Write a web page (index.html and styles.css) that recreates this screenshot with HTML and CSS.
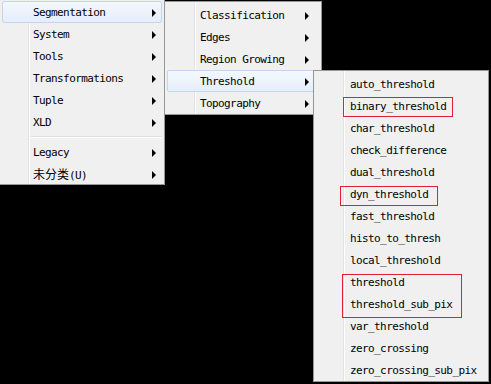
FILE: index.html
```html
<!DOCTYPE html>
<html lang="en">
<head>
    <meta charset="UTF-8">
    <title>Operators menu</title>
    <link rel="stylesheet" href="styles.css">
</head>
<body>
    <div class="menu menu-main">
        <div class="item active">Segmentation<i class="arrow"></i></div>
        <div class="item">System<i class="arrow"></i></div>
        <div class="item">Tools<i class="arrow"></i></div>
        <div class="item">Transformations<i class="arrow"></i></div>
        <div class="item">Tuple<i class="arrow"></i></div>
        <div class="item">XLD<i class="arrow"></i></div>
        <div class="sep"></div>
        <div class="item">Legacy<i class="arrow"></i></div>
        <div class="item"><span><span class="cjk">未分类</span>(U)</span><i class="arrow"></i></div>
    </div>

    <div class="menu menu-seg">
        <div class="item">Classification<i class="arrow"></i></div>
        <div class="item">Edges<i class="arrow"></i></div>
        <div class="item">Region Growing<i class="arrow"></i></div>
        <div class="item active">Threshold<i class="arrow"></i></div>
        <div class="item">Topography<i class="arrow"></i></div>
    </div>

    <div class="menu menu-thr">
        <div class="item">auto_threshold</div>
        <div class="item">binary_threshold</div>
        <div class="item">char_threshold</div>
        <div class="item">check_difference</div>
        <div class="item">dual_threshold</div>
        <div class="item">dyn_threshold</div>
        <div class="item">fast_threshold</div>
        <div class="item">histo_to_thresh</div>
        <div class="item">local_threshold</div>
        <div class="item">threshold</div>
        <div class="item">threshold_sub_pix</div>
        <div class="item">var_threshold</div>
        <div class="item">zero_crossing</div>
        <div class="item">zero_crossing_sub_pix</div>

        <!-- red marks -->
        <div class="mark mark-binary"></div>
        <div class="mark mark-dyn"></div>
        <div class="mark mark-group"></div>
    </div>
</body>
</html>
```

FILE: styles.css
```css
*{
    margin: 0;
    padding: 0;
    box-sizing: border-box;
}
body{
    width: 491px;
    height: 384px;
    background-color: #000;
    overflow: hidden;
    position: relative;
    font-family: "DejaVu Sans Mono", "Liberation Mono", monospace;
    font-size: 11px;
    letter-spacing: -0.6px;
    color: #000;
}
.menu{
    position: absolute;
    border: 1px solid #979797;
    padding: 2px 2px 0 2px;
    background: linear-gradient(to right, #f0f0f0 28px, #e2e3e3 28px, #e2e3e3 29px, #fff 29px, #fff 30px, #f0f0f0 30px);
}
.menu-main{
    left: -1px;
    top: -2px;
    width: 166px;
    height: 187px;
}
.menu-seg{
    left: 164px;
    top: 1px;
    width: 158px;
    height: 114px;
    background: linear-gradient(to right, #f0f0f0 29px, #e2e3e3 29px, #e2e3e3 30px, #fff 30px, #fff 31px, #f0f0f0 31px);
}
.menu-thr{
    left: 313px;
    top: 70px;
    width: 176px;
    height: 312px;
    background: linear-gradient(to right, #f0f0f0 29px, #e2e3e3 29px, #e2e3e3 30px, #fff 30px, #fff 31px, #f0f0f0 31px);
}
.item{
    height: 22px;
    line-height: 20px;
    padding-top: 2px;
    border: 1px solid transparent;
    border-radius: 2px;
    display: flex;
    align-items: center;
    justify-content: space-between;
    white-space: nowrap;
}
.menu-main .item{
    padding-left: 30px;
    padding-right: 5px;
}
.menu-seg .item{
    padding-left: 32px;
    padding-right: 9px;
}
.menu-thr .item{
    padding-left: 33px;
    padding-right: 6px;
}
.item.active{
    background: linear-gradient(#f4f8fd, #e4eefa);
    border-color: #c3d6ee;
}
.arrow{
    width: 0;
    height: 0;
    border-left: 4px solid #000;
    border-top: 4px solid transparent;
    border-bottom: 4px solid transparent;
}
.sep{
    height: 8px;
    margin-left: 29px;
    display: flex;
    flex-direction: column;
    justify-content: center;
}
.sep::before{
    content: "";
    height: 1px;
    background-color: #e0e0e0;
    border-bottom: 1px solid #fff;
    box-sizing: content-box;
}
.cjk{
    font-family: "Noto Sans CJK SC", sans-serif;
    font-size: 12px;
    letter-spacing: 0;
}
.mark{
    position: absolute;
    border: 1px solid #e0203a;
}
.mark-binary{
    left: 29px;
    top: 26px;
    width: 110px;
    height: 20px;
}
.mark-dyn{
    left: 26px;
    top: 115px;
    width: 98px;
    height: 20px;
}
.mark-group{
    left: 28px;
    top: 203px;
    width: 120px;
    height: 44px;
}
```
